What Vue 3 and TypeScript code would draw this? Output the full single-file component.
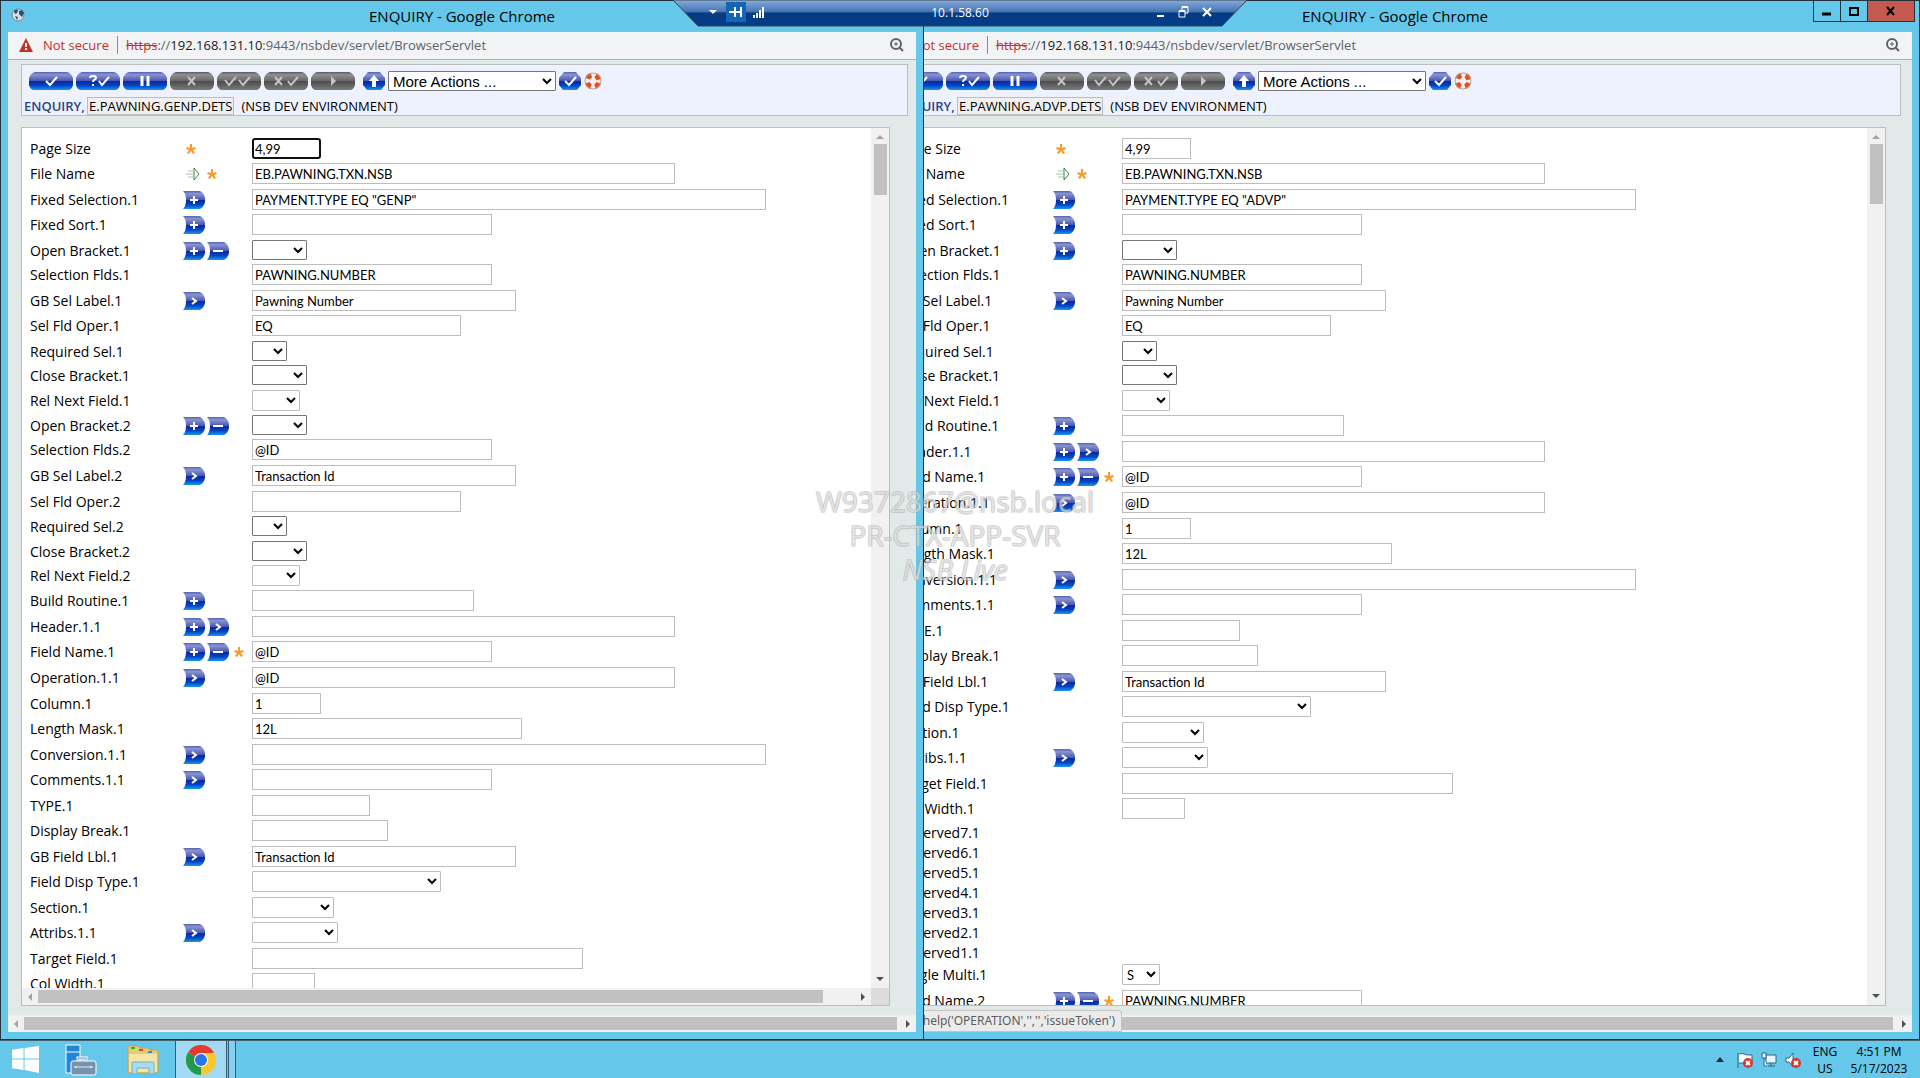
<script setup lang="ts">
type Kind = 'input' | 'select' | 'none'
type Icon = 'plus' | 'minus' | 'next' | 'star' | 'pick'

interface Row {
  label: string
  kind: Kind
  w: number
  h: number
  value?: string
  icons?: Icon[]
  light?: boolean
  focus?: boolean
}

interface Win {
  id: string
  record: string
  hscroll: boolean
  rows: Row[]
}

const text = (label: string, w: number, h: number, value = '', icons: Icon[] = []): Row => ({
  label, kind: 'input', w, h, value, icons,
})
const pick = (label: string, w: number, h: number, icons: Icon[] = [], light = false, value = ''): Row => ({
  label, kind: 'select', w, h, icons, light, value,
})
const blank = (label: string, h = 20): Row => ({ label, kind: 'none', w: 0, h })

const head = (type: string, bracket: Icon[], focus: boolean): Row[] => [
  { ...text('Page Size', 69, 25, '4,99', ['star']), focus },
  text('File Name', 423, 26, 'EB.PAWNING.TXN.NSB', ['pick', 'star']),
  text('Fixed Selection.1', 514, 25, `PAYMENT.TYPE EQ "${type}"`, ['plus']),
  text('Fixed Sort.1', 240, 26, '', ['plus']),
  pick('Open Bracket.1', 55, 24, bracket),
  text('Selection Flds.1', 240, 26, 'PAWNING.NUMBER'),
  text('GB Sel Label.1', 264, 25, 'Pawning Number', ['next']),
  text('Sel Fld Oper.1', 209, 26, 'EQ'),
  pick('Required Sel.1', 35, 24),
  pick('Close Bracket.1', 55, 25),
  pick('Rel Next Field.1', 48, 25, [], true),
]

const detail: Row[] = [
  text('Build Routine.1', 222, 26, '', ['plus']),
  text('Header.1.1', 423, 25, '', ['plus', 'next']),
  text('Field Name.1', 240, 26, '@ID', ['plus', 'minus', 'star']),
  text('Operation.1.1', 423, 26, '@ID', ['next']),
  text('Column.1', 69, 25, '1'),
  text('Length Mask.1', 270, 26, '12L'),
  text('Conversion.1.1', 514, 25, '', ['next']),
  text('Comments.1.1', 240, 26, '', ['next']),
  text('TYPE.1', 118, 25),
  text('Display Break.1', 136, 26),
  text('GB Field Lbl.1', 264, 25, 'Transaction Id', ['next']),
  pick('Field Disp Type.1', 189, 26, [], true),
  pick('Section.1', 82, 25, [], true),
  pick('Attribs.1.1', 86, 26, ['next'], true),
  text('Target Field.1', 331, 25),
  text('Col Width.1', 63, 26),
]

const windows: Win[] = [
  {
    id: 'advp',
    record: 'E.PAWNING.ADVP.DETS',
    hscroll: false,
    rows: [
      ...head('ADVP', ['plus'], false),
      ...detail,
      ...[7, 6, 5, 4, 3, 2, 1].map((n) => blank(`Reserved${n}.1`)),
      pick('Single Multi.1', 38, 26, [], true, 'S'),
      text('Field Name.2', 240, 26, 'PAWNING.NUMBER', ['plus', 'minus', 'star']),
    ],
  },
  {
    id: 'genp',
    record: 'E.PAWNING.GENP.DETS',
    hscroll: true,
    rows: [
      ...head('GENP', ['plus', 'minus'], true),
      pick('Open Bracket.2', 55, 24, ['plus', 'minus']),
      text('Selection Flds.2', 240, 26, '@ID'),
      text('GB Sel Label.2', 264, 26, 'Transaction Id', ['next']),
      text('Sel Fld Oper.2', 209, 25),
      pick('Required Sel.2', 35, 25),
      pick('Close Bracket.2', 55, 24),
      pick('Rel Next Field.2', 48, 25, [], true),
      ...detail,
    ],
  },
]

const tools: { name: string; off: boolean; paths: string[]; solid?: boolean }[] = [
  { name: 'Commit', off: false, paths: ['M17 9l4 4 7-8'] },
  { name: 'Validate', off: false, paths: ['M23 9l3 4 7-8', 'M14 6q0-2 3-2 3 0 3 2 0 1-2 2-1 1-1 2M17 12v2'] },
  { name: 'Hold', off: false, paths: ['M19 4v10M25 4v10'] },
  { name: 'Delete', off: true, paths: ['M18 5l7 8M25 5l-7 8'] },
  { name: 'Authorise', off: true, paths: ['M8 8l4 5 7-8', 'M22 8l4 5 7-8'] },
  { name: 'Reverse', off: true, paths: ['M11 5l7 8M18 5l-7 8', 'M24 9l3 4 7-8'] },
  { name: 'Verify', off: true, paths: ['M20 4l5 5-5 5z'], solid: true },
]
</script>

<template>
  <div class="desktop">
    <svg class="defs" width="0" height="0" aria-hidden="true">
      <defs>
        <linearGradient id="blue" x1="0" y1="0" x2="0" y2="1">
          <stop offset="0" stop-color="#5463b4" />
          <stop offset=".15" stop-color="#8a94d0" />
          <stop offset=".48" stop-color="#4a58b4" />
          <stop offset=".52" stop-color="#0c2a9c" />
          <stop offset=".75" stop-color="#0444c4" />
          <stop offset="1" stop-color="#1596f4" />
        </linearGradient>
        <linearGradient id="grey" x1="0" y1="0" x2="0" y2="1">
          <stop offset="0" stop-color="#5c5c5c" />
          <stop offset=".15" stop-color="#909090" />
          <stop offset=".48" stop-color="#6a6a6a" />
          <stop offset=".52" stop-color="#4c4c4c" />
          <stop offset="1" stop-color="#7c7c7c" />
        </linearGradient>
      </defs>
    </svg>

    <section v-for="win in windows" :key="win.id" class="window" :class="win.id">
      <header class="title">
        <svg v-if="win.hscroll" class="globe" width="14" height="14" viewBox="0 0 14 14">
          <circle cx="7" cy="7" r="6" fill="#d8dde2" stroke="#7b858e" />
          <path d="M3 3q2-2 4-1l-1 3-2 1zM8 3l3-1 2 3-2 4-3-3zM4 8l3 1-1 3z" fill="#2c4d73" />
        </svg>
        <h1>ENQUIRY - Google Chrome</h1>
        <div v-if="!win.hscroll" class="caption">
          <button type="button" aria-label="Minimize">
            <svg width="12" height="12"><path d="M1 9h9" stroke="#000" stroke-width="3" /></svg>
          </button>
          <button type="button" aria-label="Maximize">
            <svg width="12" height="12"><path d="M2 3h8v7H2z" fill="none" stroke="#000" stroke-width="2" /></svg>
          </button>
          <button type="button" class="close" aria-label="Close">
            <svg width="12" height="12"><path d="M2 2l7 8M9 2l-7 8" stroke="#000" stroke-width="2" /></svg>
          </button>
        </div>
      </header>

      <div class="url">
        <svg width="16" height="14" viewBox="0 0 16 14">
          <path d="M8 0l7 14H1z" fill="#c5302a" />
          <path d="M8 5v4M8 10v2" stroke="#fff" stroke-width="2" />
        </svg>
        <span class="insecure">Not secure</span>
        <span class="address"><s>https</s>://<b>192.168.131.10</b>:9443/nsbdev/servlet/BrowserServlet</span>
        <svg class="zoom" width="14" height="14" viewBox="0 0 14 14" fill="none" stroke="#5f6368">
          <circle cx="6" cy="6" r="5" stroke-width="2" />
          <path d="M9 9l4 4" stroke-width="2" />
          <path d="M6 4v4M4 6h4" />
        </svg>
      </div>

      <main class="page">
        <div class="panel">
          <div class="tools">
            <button v-for="t in tools" :key="t.name" type="button" :aria-label="t.name" :disabled="t.off">
              <svg width="44" height="18" viewBox="0 0 44 18">
                <path d="M6 0h32q4 1 6 6v7q-1 4-4 5H4q-3-1-4-5V6q2-5 6-6z" :fill="t.off ? 'url(#grey)' : 'url(#blue)'" />
                <path
                  v-for="p in t.paths" :key="p" :d="p"
                  :fill="t.solid ? '#c4c4c4' : 'none'" :stroke="t.off ? '#c4c4c4' : '#fff'"
                  :stroke-width="t.solid ? 0 : t.name === 'Hold' ? 3 : 2"
                />
              </svg>
            </button>
            <button type="button" class="up" aria-label="Up">
              <svg width="22" height="18" viewBox="0 0 22 18">
                <path d="M5 0h12l5 6v7l-4 5H4l-4-5V6z" fill="url(#blue)" />
                <path d="M11 3l5 6h-3v6H9V9H6z" fill="#fff" />
              </svg>
            </button>
            <select aria-label="More actions"><option>More Actions ...</option></select>
            <button type="button" aria-label="Go">
              <svg width="22" height="18" viewBox="0 0 22 18">
                <path d="M5 0h12l5 6v7l-4 5H4l-4-5V6z" fill="url(#blue)" />
                <path d="M6 9l4 4 7-8" fill="none" stroke="#fff" stroke-width="2" />
              </svg>
            </button>
            <button type="button" aria-label="Help">
              <svg width="18" height="18" viewBox="0 0 18 18" fill="none">
                <circle cx="9" cy="9" r="6" stroke="#f3ece8" stroke-width="5" />
                <circle cx="9" cy="9" r="6" stroke="#e0501c" stroke-width="5" stroke-dasharray="5 4.42" stroke-dashoffset="-2" />
                <circle cx="9" cy="9" r="8" stroke="#b9a49c" />
              </svg>
            </button>
          </div>
          <div class="crumb">
            <strong>ENQUIRY,</strong>
            <span class="chip">{{ win.record }}</span>
            <span>(NSB DEV ENVIRONMENT)</span>
          </div>
        </div>

        <div class="frame">
          <form class="form" @submit.prevent>
            <div v-for="row in win.rows" :key="row.label" class="row" :class="row.kind" :style="{ height: row.h + 'px' }">
              <label :for="win.id + row.label">{{ row.label }}</label>
              <span class="icons">
                <svg v-for="i in row.icons" :key="i" :class="i" :width="i === 'star' ? 16 : i === 'pick' ? 19 : 22" height="18">
                  <template v-if="i === 'star'">
                    <path d="M7 4h2v4l3-1 1 2-3 1 2 3-2 1-2-3-2 3-2-1 2-3-3-1 1-2 3 1z" fill="#fb9a2c" />
                  </template>
                  <template v-else-if="i === 'pick'">
                    <path d="M5 6h5M3 9h7M5 12h5" stroke="#a8c8a0" />
                    <path d="M11 3v12l5-6z" fill="#fff" stroke="#3c8040" />
                  </template>
                  <template v-else>
                    <path d="M0 0h17q4 2 5 7v4q-1 5-5 7H0q3-3 3-9T0 0z" fill="url(#blue)" />
                    <path v-if="i === 'plus'" d="M11 5v8M7 9h8" stroke="#fff" stroke-width="2" />
                    <path v-else-if="i === 'minus'" d="M6 9h10" stroke="#fff" stroke-width="2" />
                    <path v-else d="M9 6l4 3-4 3" fill="none" stroke="#fff" stroke-width="2" />
                  </template>
                </svg>
              </span>
              <input
                v-if="row.kind === 'input'" :id="win.id + row.label" type="text" :value="row.value"
                :class="{ focus: row.focus }" :style="{ width: row.w + 'px' }"
              />
              <select
                v-else-if="row.kind === 'select'" :id="win.id + row.label"
                :class="{ light: row.light }" :style="{ width: row.w + 'px' }"
              >
                <option>{{ row.value }}</option>
              </select>
            </div>
          </form>
          <div class="vbar"><i class="arrow up-arrow"></i><i class="thumb"></i><i class="arrow down-arrow"></i></div>
          <template v-if="win.hscroll">
            <div class="hbar"><i class="arrow left-arrow"></i><i class="thumb"></i><i class="arrow right-arrow"></i></div>
            <div class="corner"></div>
          </template>
        </div>
        <div class="hbar page-bar"><i class="arrow left-arrow"></i><i class="thumb"></i><i class="arrow right-arrow"></i></div>
        <output v-if="!win.hscroll" class="status">javascript:help('OPERATION','','','issueToken')</output>
      </main>
    </section>

    <div class="rdp">
      <svg class="shape" viewBox="0 0 574 27" preserveAspectRatio="none">
        <defs>
          <linearGradient id="bar" x1="0" y1="0" x2="0" y2="1">
            <stop offset="0" stop-color="#86aedb" />
            <stop offset=".45" stop-color="#4674b4" />
            <stop offset=".5" stop-color="#053c82" />
            <stop offset="1" stop-color="#053c88" />
          </linearGradient>
        </defs>
        <path d="M0 0h574l-25 26H25z" fill="url(#bar)" stroke="#39424e" />
      </svg>
      <div class="rdp-items">
        <button type="button" aria-label="Menu"><svg width="10" height="10"><path d="M1 3h8L5 7z" fill="#fff" /></svg></button>
        <button type="button" class="pin" aria-label="Pin">
          <svg width="14" height="12"><path d="M0 6h5M6 1v10M6 6h6M12 1v10" stroke="#fff" stroke-width="2" /></svg>
        </button>
        <button type="button" aria-label="Connection">
          <svg width="12" height="12"><path d="M1 9v3M4 7v5M7 4v8M10 1v11" stroke="#fff" stroke-width="2" /></svg>
        </button>
        <span class="host">10.1.58.60</span>
        <button type="button" aria-label="Minimize"><svg width="12" height="12"><path d="M2 10h7" stroke="#fff" stroke-width="2" /></svg></button>
        <button type="button" aria-label="Restore">
          <svg width="12" height="12"><path d="M1 5h6v6H1zM4 5V1h6v6H7" fill="none" stroke="#fff" stroke-width="1" /><path d="M1 5h6M4 1h6" stroke="#fff" stroke-width="2" /></svg>
        </button>
        <button type="button" aria-label="Close"><svg width="12" height="12"><path d="M2 2l8 8M10 2l-8 8" stroke="#fff" stroke-width="2" /></svg></button>
      </div>
    </div>

    <div class="watermark">
      <p>W9372867@nsb.local</p>
      <p>PR-CTX-APP-SVR</p>
      <p><em>NSB Live</em></p>
    </div>

    <footer class="taskbar">
      <button type="button" class="task start" aria-label="Start">
        <svg width="27" height="27" viewBox="0 0 28 28" fill="#fff">
          <path d="M0 4l12-2v11H0zM13 2l15-2v13H13zM0 14h12v11L0 23zM13 14h15v14l-15-3z" />
        </svg>
      </button>
      <button type="button" class="task" aria-label="Server Manager">
        <svg width="32" height="32" viewBox="0 0 32 32">
          <path d="M1 1h14v28H1z" fill="#1f86d8" stroke="#fff" />
          <path d="M1 8h14" stroke="#fff" />
          <path d="M13 17v-3h8v3" fill="none" stroke="#fff" stroke-width="3" />
          <path d="M13 17v-3h8v3" fill="none" stroke="#6d8aa5" />
          <rect x="6" y="17" width="25" height="14" rx="2" fill="#7494ae" stroke="#fff" />
          <path d="M9 23h19" stroke="#dfe9f0" />
          <path d="M11 22v2M26 22v2" stroke="#fff" />
        </svg>
      </button>
      <button type="button" class="task files" aria-label="File Explorer">
        <svg width="32" height="30" viewBox="0 0 32 30">
          <path d="M1 2q0-1 1-1h9l2 2h8l2 2h7q1 0 1 1v20q0 2-2 2H2q-1 0-1-2z" fill="#e5cc78" stroke="#c2a44e" />
          <path d="M2 9h28v18H2z" fill="#f6e6a2" />
          <path d="M4 3h4" stroke="#1fb52e" stroke-width="2" />
          <path d="M12 5h4" stroke="#d8452c" stroke-width="2" />
          <path d="M21 7h4" stroke="#2f8fe0" stroke-width="2" />
          <path d="M5 29V18q0-1 1-1h20q1 0 1 1v11h-5v-6H10v6z" fill="#a7dcef" stroke="#6fb0d0" />
        </svg>
      </button>
      <button type="button" class="task active" aria-label="Google Chrome">
        <svg width="30" height="30" viewBox="0 0 30 30">
          <path d="M15 15L2 7.500A15 15 0 0 1 28 7.500z" fill="#e33b2e" />
          <path d="M15 15l13-7.500A15 15 0 0 1 15 30z" fill="#fcc72b" />
          <path d="M15 15v15A15 15 0 0 1 2 7.500z" fill="#229a49" />
          <path d="M15 8h13.300L15 30l6.500-11z" fill="#fcc72b" />
          <path d="M2 7.500L8.500 19l6.500 3z" fill="#229a49" />
          <circle cx="15" cy="15" r="7" fill="#fff" />
          <circle cx="15" cy="15" r="6" fill="#2a75e8" />
        </svg>
      </button>
      <div class="stack"></div>
      <div class="tray">
        <svg class="more" width="8" height="5"><path d="M0 5l4-5 4 5z" fill="#1c2b33" /></svg>
        <svg width="16" height="16" viewBox="0 0 16 16">
          <path d="M1 16V1M2 2q3-1 5 0t5 1h3v8H2" fill="#fff" stroke="#2e6580" />
          <circle cx="11" cy="11" r="5" fill="#d8362c" />
          <path d="M9 9l4 4M13 9l-4 4" stroke="#fff" stroke-width="2" />
        </svg>
        <svg width="16" height="16" viewBox="0 0 16 16" fill="#e6f5fc" stroke="#2e6580">
          <path d="M5 3h10v8H5zM7 14h7M10 11v3" /><path d="M1 1h4v5H1zM3 6v8h3" />
        </svg>
        <svg width="16" height="16" viewBox="0 0 16 16">
          <path d="M1 6h3l4-5v14l-4-5H1z" fill="#fff" stroke="#2e6580" />
          <circle cx="11" cy="11" r="5" fill="#d8362c" />
          <path d="M9 9l4 4M13 9l-4 4" stroke="#fff" stroke-width="2" />
        </svg>
        <div class="two">ENG<br />US</div>
        <div class="two clock">4:51 PM<br />5/17/2023</div>
      </div>
    </footer>
  </div>
</template>

<style>
body {
  margin: 0;
}
</style>

<style scoped>
.desktop {
  position: relative;
  height: 100vh;
  overflow: hidden;
  background: #65c8ea;
  color: #000;
  font-family: 'Open Sans', 'Noto Sans', sans-serif;
  display: flex;
  flex-direction: column;
  justify-content: flex-end;
}
.desktop *,
.desktop {
  box-sizing: border-box;
}
.defs {
  position: absolute;
}
button {
  border: 0;
  padding: 0;
  background: none;
  display: flex;
  align-items: center;
  justify-content: center;
}
svg {
  display: block;
  flex: none;
}

/* windows */
.window {
  position: absolute;
  top: 0;
  bottom: 38px;
  display: flex;
  flex-direction: column;
  padding: 0 7px 7px;
  border: 1px solid #25323a;
  background: #65c8ea;
}
.advp {
  left: 45.3125%;
  right: 0;
}
.genp {
  left: 0;
  width: 48.125%;
}
.title {
  position: relative;
  display: flex;
  align-items: center;
  justify-content: center;
  height: 30px;
}
.title h1 {
  margin: 0;
  font-size: 15px;
  font-weight: 400;
  line-height: 20px;
}
.globe {
  position: absolute;
  left: 3px;
  top: 7px;
}
.caption {
  position: absolute;
  top: 0;
  right: -3px;
  display: flex;
  height: 21px;
  border: 1px solid #25323a;
  border-top: 0;
}
.caption button {
  width: 27px;
  border-right: 1px solid #25323a;
}
.caption .close {
  width: 46px;
  border-right: 0;
  background: #c3594f;
}
.url {
  display: flex;
  align-items: center;
  height: 29px;
  padding: 0 12px 2px 10px;
  border-top: 1px solid #a3b3bf;
  border-bottom: 1px solid #b0b0b0;
  background: #f2f3f4;
  font-size: 13px;
  color: #5f6368;
}
.insecure {
  width: 76px;
  margin: 0 8px;
  padding-left: 1px;
  color: #c5302a;
  white-space: nowrap;
  line-height: 18px;
  border-right: 1px solid #8c9094;
}
.address b {
  font-weight: 400;
  color: #202124;
}
.address s {
  color: #c5302a;
}
.zoom {
  margin-left: auto;
}
.page {
  position: relative;
  flex: 1;
  min-height: 0;
  display: flex;
  flex-direction: column;
  background: #e1eae8;
}
.panel {
  height: 52px;
  margin: 4px 8px 11px 13px;
  border: 1px solid #bdbdbd;
  background: #eef2ff;
}
.advp .panel {
  margin-right: 11px;
}
.tools {
  display: flex;
  align-items: center;
  gap: 3px;
  padding: 6px 7px 0;
  height: 26px;
}
.tools .up {
  margin-left: 5px;
}
.tools select {
  width: 168px;
  height: 20px;
  padding: 0;
  border: 1px solid #767676;
  border-radius: 1px;
  background: #fff;
  font: 15px 'Liberation Sans', Arial, sans-serif;
  color: #000;
}
.crumb {
  display: flex;
  align-items: center;
  height: 25px;
  padding: 5px 0 0 2px;
  font-size: 13px;
  line-height: 18px;
}
.crumb strong {
  width: 63px;
  font-weight: 600;
  color: #2c4484;
}
.chip {
  height: 18px;
  padding: 0 1px;
  margin-right: 7px;
  line-height: 16px;
  border: 1px solid #bdbdbd;
  background: #f0f0f0;
}

/* scrolled record */
.frame {
  flex: 1;
  min-height: 0;
  display: grid;
  grid-template-columns: 1fr 18px;
  grid-template-rows: 1fr auto;
  margin: 0 26px 9px 13px;
  border: 1px solid #bdbdbd;
  background: #fff;
}
.form {
  min-height: 0;
  overflow: hidden;
  padding: 8px 0 0 8px;
}
.row {
  display: flex;
  align-items: flex-start;
  padding-top: 2px;
}
.row.none {
  padding-top: 0;
}
.row label {
  width: 153px;
  font-size: 14px;
  line-height: 21px;
  white-space: nowrap;
}
.icons {
  display: flex;
  gap: 2px;
  width: 69px;
  padding-top: 2px;
}
.row input,
.row select {
  height: 21px;
  padding: 0 2px;
  border: 1px solid #bdbdbd;
  border-radius: 0;
  background: #fff;
  color: #000;
  font: 13px Lato, sans-serif;
  outline: 0;
}
.row select {
  height: 20px;
  padding: 0;
  border: 1px solid #767676;
  border-radius: 1px;
}
.row select.light {
  height: 21px;
  border-color: #bdbdbd;
}
.row input.focus {
  border: 2px solid #101010;
  border-radius: 3px;
  padding: 0 1px;
}

/* scroll bars */
.vbar {
  grid-column: 2;
  grid-row: 1;
  display: flex;
  flex-direction: column;
  align-items: center;
  padding: 7px 0;
  background: #f1f1f1;
}
.vbar .thumb {
  width: 13px;
  height: 60px;
  margin: 5px 0 auto;
  background: #c1c1c1;
}
.genp .vbar .thumb {
  height: 51px;
}
.hbar {
  display: flex;
  align-items: center;
  height: 17px;
  padding: 0 6px;
  background: #f1f1f1;
}
.hbar .thumb {
  flex: 1;
  height: 13px;
  margin: 0 6px;
  background: #c1c1c1;
}
.frame .hbar .thumb {
  margin-right: 38px;
}
.page-bar .thumb {
  margin-right: 9px;
}
.corner {
  background: #dcdcdc;
}
.arrow {
  width: 0;
  height: 0;
  border: 4px solid transparent;
}
.up-arrow {
  border-top: 0;
  border-bottom-color: #a3a3a3;
}
.down-arrow {
  border-bottom: 0;
  border-top-color: #505050;
}
.left-arrow {
  border-left: 0;
  border-right-color: #a3a3a3;
}
.right-arrow {
  border-right: 0;
  border-left-color: #505050;
}
.status {
  position: absolute;
  left: 0;
  bottom: 0;
  width: 244px;
  height: 22px;
  padding-right: 6px;
  overflow: hidden;
  display: flex;
  justify-content: flex-end;
  border: 1px solid #c4c4c4;
  border-left: 0;
  border-radius: 0 4px 0 0;
  background: #ebebeb;
  font-family: 'Noto Sans', sans-serif;
  font-size: 12px;
  line-height: 20px;
  white-space: nowrap;
  color: #5a5d61;
}

/* remote session bar */
.rdp {
  position: absolute;
  top: 0;
  left: 673px;
  width: 574px;
  height: 27px;
}
.shape {
  position: absolute;
  width: 100%;
  height: 100%;
}
.rdp-items {
  position: relative;
  display: flex;
  align-items: center;
  gap: 3px;
  height: 24px;
  padding: 0 30px;
  color: #fff;
  font-size: 12px;
}
.rdp-items button {
  width: 20px;
  height: 20px;
}
.rdp-items .pin {
  background: #1464b8;
}
.host {
  flex: 1;
  text-align: center;
}

.watermark {
  position: absolute;
  top: 484px;
  left: 0;
  right: 10px;
  pointer-events: none;
  text-align: center;
  font-size: 28px;
  line-height: 34px;
  color: rgba(255, 255, 255, 0.5);
  text-shadow:
    -1px -1px 0 rgba(160, 160, 160, 0.18),
    1px -1px 0 rgba(160, 160, 160, 0.18),
    -1px 1px 0 rgba(160, 160, 160, 0.18),
    1px 1px 0 rgba(160, 160, 160, 0.18);
  -webkit-text-stroke: 1px rgba(170, 170, 170, 0.4);
}
.watermark p {
  margin: 0;
}

/* task bar */
.taskbar {
  display: flex;
  align-items: stretch;
  height: 38px;
  border-top: 1px solid #4b5f6a;
  background: #65c8ea;
}
.task {
  width: 60px;
}
.task.start {
  width: 51px;
}
.task.files {
  width: 64px;
}
.task.active {
  width: 52px;
  border: 1px solid #2f5e72;
  border-width: 0 1px;
  background: #a2daf4;
}
.stack {
  width: 8px;
  border: 1px solid #2f5e72;
  border-width: 0 1px;
  margin-left: 1px;
  background: #84d0ee;
}
.tray {
  display: flex;
  align-items: center;
  gap: 8px;
  margin-left: auto;
  padding-right: 11px;
}
.tray .more {
  margin-right: 5px;
}
.two {
  width: 32px;
  font-size: 12px;
  line-height: 17px;
  text-align: center;
}
.clock {
  width: 60px;
}
</style>
